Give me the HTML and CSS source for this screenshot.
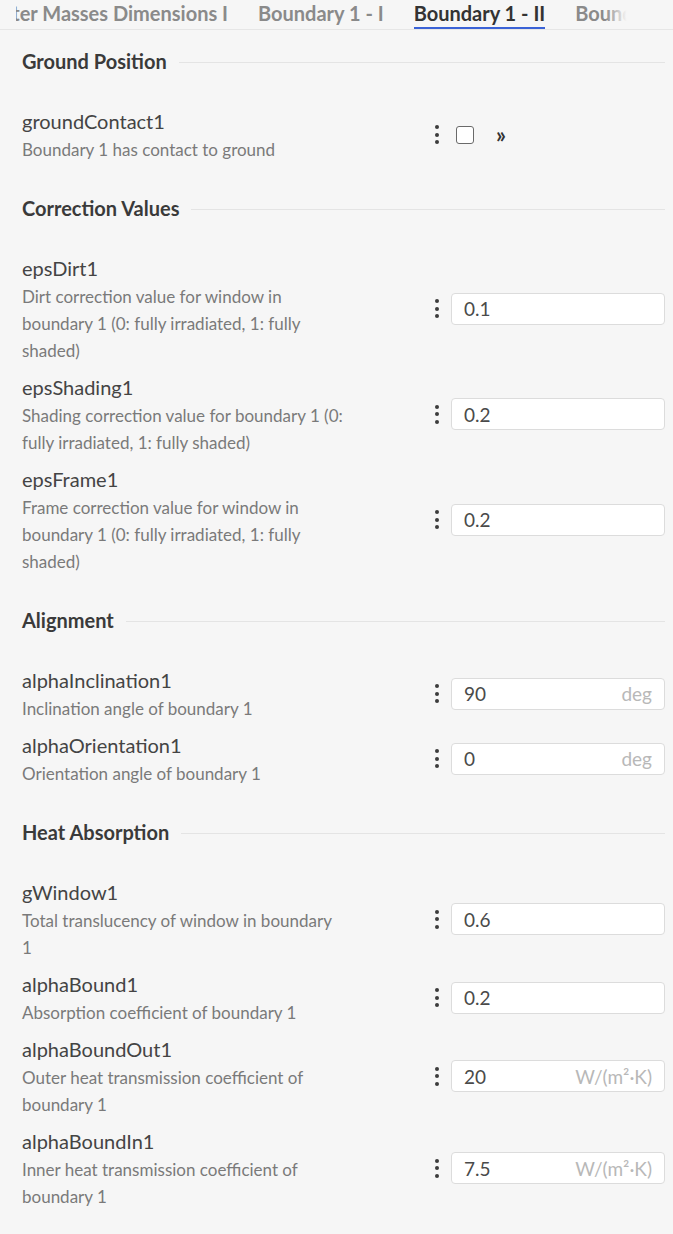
FILE: index.html
```html
<!DOCTYPE html>
<html lang="en">
<head>
<meta charset="utf-8">
<title>Boundary 1 - II</title>
<link rel="stylesheet" href="styles.css">
</head>
<body>
<nav class="tabs">
  <div class="tab-strip">
    <span class="tab">Outer Masses Dimensions I</span>
    <span class="tab">Boundary 1 - I</span>
    <span class="tab active">Boundary 1 - II</span>
    <span class="tab">Boundary 1 - III</span>
  </div>
</nav>

<main class="content">
  <section class="group">
    <h2 class="group-title"><span>Ground Position</span></h2>
    <div class="row">
      <div class="info">
        <div class="name">groundContact1</div>
        <div class="desc">Boundary 1 has contact to ground</div>
      </div>
      <div class="control">
        <span class="dots"><i></i><i></i><i></i></span>
        <span class="checkbox"></span>
        <span class="chev">»</span>
      </div>
    </div>
  </section>

  <section class="group">
    <h2 class="group-title"><span>Correction Values</span></h2>
    <div class="row">
      <div class="info">
        <div class="name">epsDirt1</div>
        <div class="desc">Dirt correction value for window in boundary 1 (0: fully irradiated, 1: fully shaded)</div>
      </div>
      <div class="control">
        <span class="dots"><i></i><i></i><i></i></span>
        <div class="field"><span class="val">0.1</span></div>
      </div>
    </div>
    <div class="row">
      <div class="info">
        <div class="name">epsShading1</div>
        <div class="desc">Shading correction value for boundary 1 (0: fully irradiated, 1: fully shaded)</div>
      </div>
      <div class="control">
        <span class="dots"><i></i><i></i><i></i></span>
        <div class="field"><span class="val">0.2</span></div>
      </div>
    </div>
    <div class="row">
      <div class="info">
        <div class="name">epsFrame1</div>
        <div class="desc">Frame correction value for window in boundary 1 (0: fully irradiated, 1: fully shaded)</div>
      </div>
      <div class="control">
        <span class="dots"><i></i><i></i><i></i></span>
        <div class="field"><span class="val">0.2</span></div>
      </div>
    </div>
  </section>

  <section class="group">
    <h2 class="group-title"><span>Alignment</span></h2>
    <div class="row">
      <div class="info">
        <div class="name">alphaInclination1</div>
        <div class="desc">Inclination angle of boundary 1</div>
      </div>
      <div class="control">
        <span class="dots"><i></i><i></i><i></i></span>
        <div class="field"><span class="val">90</span><span class="unit">deg</span></div>
      </div>
    </div>
    <div class="row">
      <div class="info">
        <div class="name">alphaOrientation1</div>
        <div class="desc">Orientation angle of boundary 1</div>
      </div>
      <div class="control">
        <span class="dots"><i></i><i></i><i></i></span>
        <div class="field"><span class="val">0</span><span class="unit">deg</span></div>
      </div>
    </div>
  </section>

  <section class="group">
    <h2 class="group-title"><span>Heat Absorption</span></h2>
    <div class="row">
      <div class="info">
        <div class="name">gWindow1</div>
        <div class="desc">Total translucency of window in boundary 1</div>
      </div>
      <div class="control">
        <span class="dots"><i></i><i></i><i></i></span>
        <div class="field"><span class="val">0.6</span></div>
      </div>
    </div>
    <div class="row">
      <div class="info">
        <div class="name">alphaBound1</div>
        <div class="desc">Absorption coefficient of boundary 1</div>
      </div>
      <div class="control">
        <span class="dots"><i></i><i></i><i></i></span>
        <div class="field"><span class="val">0.2</span></div>
      </div>
    </div>
    <div class="row">
      <div class="info">
        <div class="name">alphaBoundOut1</div>
        <div class="desc">Outer heat transmission coefficient of boundary 1</div>
      </div>
      <div class="control">
        <span class="dots"><i></i><i></i><i></i></span>
        <div class="field"><span class="val">20</span><span class="unit">W/(m²·K)</span></div>
      </div>
    </div>
    <div class="row">
      <div class="info">
        <div class="name">alphaBoundIn1</div>
        <div class="desc">Inner heat transmission coefficient of boundary 1</div>
      </div>
      <div class="control">
        <span class="dots"><i></i><i></i><i></i></span>
        <div class="field"><span class="val">7.5</span><span class="unit">W/(m²·K)</span></div>
      </div>
    </div>
  </section>
</main>
</body>
</html>
```

FILE: styles.css
```css
* { box-sizing: border-box; }

html, body {
  margin: 0;
  padding: 0;
  background: #f6f6f6;
  font-family: Lato, "Open Sans", sans-serif;
  color: #444;
}

.tabs {
  position: relative;
  height: 30px;
  overflow: hidden;
  border-bottom: 1px solid #e6e6e6;
}

.tabs::before,
.tabs::after {
  content: "";
  position: absolute;
  top: 0;
  height: 29px;
  z-index: 1;
}

.tabs::before {
  left: 0;
  width: 16px;
  background: #f6f6f6;
}

.tabs::after {
  right: 0;
  width: 68px;
  background: linear-gradient(to right, rgba(246,246,246,0), #f6f6f6 32%);
}

.tab-strip {
  display: flex;
  gap: 30px;
  margin-left: -15px;
  white-space: nowrap;
}

.tab {
  font-weight: 700;
  font-size: 20px;
  line-height: 27px;
  color: #8a8a8a;
  border-bottom: 3px solid transparent;
  height: 30px;
}

.tab.active {
  color: #333;
  border-bottom-color: #3a62d6;
}

.content {
  padding: 0 8px 20px 22px;
}

.group {
  display: flex;
  flex-direction: column;
  gap: 8px;
}

.group-title {
  display: flex;
  align-items: center;
  gap: 12px;
  margin: 17px 0 23px;
  height: 28px;
  font-size: 20px;
  font-weight: 700;
  color: #3a3a3a;
}

.group + .group .group-title {
  margin-top: 31px;
}

.group-title::after {
  content: "";
  flex: 1;
  height: 1px;
  margin-top: 3px;
  background: #e4e4e4;
}

.row {
  display: flex;
  align-items: center;
}

.info {
  width: 322px;
}

.name {
  font-size: 20px;
  line-height: 30px;
  color: #444;
}

.desc {
  font-size: 17px;
  line-height: 27px;
  color: #7a7a7a;
}

.control {
  margin-left: auto;
  width: 235px;
  display: flex;
  align-items: center;
  padding-left: 5px;
}

.dots {
  display: flex;
  flex-direction: column;
  gap: 3.5px;
  width: 16px;
}

.dots i {
  display: block;
  width: 4px;
  height: 4px;
  border-radius: 50%;
  background: #3c3c3c;
}

.checkbox {
  width: 18px;
  height: 18px;
  margin-left: 5px;
  border: 1.5px solid #6a6a6a;
  border-radius: 3px;
  background: #fff;
}

.chev {
  margin-left: 22px;
  font-size: 22px;
  font-weight: 700;
  color: #333;
  line-height: 18px;
}

.field {
  flex: 1;
  height: 32px;
  display: flex;
  align-items: center;
  justify-content: space-between;
  padding: 0 12px;
  background: #fff;
  border: 1px solid #dcdcdc;
  border-radius: 4px;
  font-size: 19px;
}

.val {
  color: #4a4a4a;
}

.unit {
  color: #b8b8b8;
}
```
